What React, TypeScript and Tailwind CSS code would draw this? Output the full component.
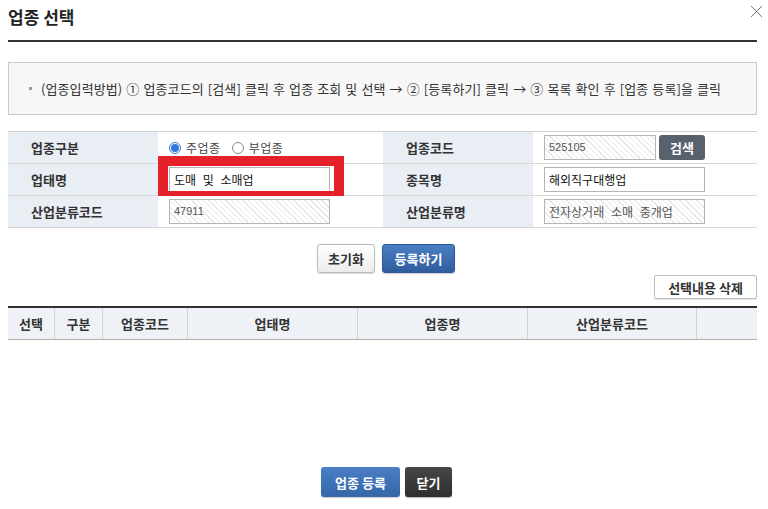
import React from "react";

const hatch =
  "bg-[repeating-linear-gradient(45deg,#ffffff_0px,#ffffff_3px,#e6e6e6_3px,#e6e6e6_4px)]";

function Radio({ checked, label }: { checked?: boolean; label: string }) {
  return (
    <label className="flex items-center gap-[5px] mr-[11px]">
      <span
        className={
          "w-[12px] h-[12px] rounded-full border flex items-center justify-center " +
          (checked ? "border-[#3b73c9] bg-white" : "border-[#8a8a8a] bg-white")
        }
      >
        {checked && <span className="w-[8px] h-[8px] rounded-full bg-[#2f7ad8]" />}
      </span>
      <span className="text-[12px] text-[#444] tracking-[0.5px]">{label}</span>
    </label>
  );
}

function Label({ children }: { children: React.ReactNode }) {
  return (
    <div className="bg-[#e9edf4] pl-[23px] flex items-center text-[13px] font-bold text-[#333] border-b border-[#d6d6d6]">
      {children}
    </div>
  );
}

function Cell({ children }: { children?: React.ReactNode }) {
  return (
    <div className="relative pl-[11px] flex items-center border-b border-[#d6d6d6] bg-white">
      {children}
    </div>
  );
}

function Field({
  value,
  readOnly,
  w = "w-[161px]",
  mono,
}: {
  value: string;
  readOnly?: boolean;
  w?: string;
  mono?: boolean;
}) {
  return (
    <div
      className={
        w +
        " h-[25px] border border-[#b5b5b5] flex items-center px-[4px] [word-spacing:4px] " +
        (readOnly ? hatch + " text-[#555]" : "bg-white text-[#111]") +
        (mono ? " text-[11px] font-['Liberation_Sans',sans-serif]" : " text-[12px]")
      }
    >
      {value}
    </div>
  );
}

export default function App() {
  const cols = [
    { name: "선택", w: "w-[47px]" },
    { name: "구분", w: "w-[48px]" },
    { name: "업종코드", w: "w-[85px]" },
    { name: "업태명", w: "w-[170px]" },
    { name: "업종명", w: "w-[170px]" },
    { name: "산업분류코드", w: "w-[169px]" },
    { name: "", w: "flex-1" },
  ];

  return (
    <div className="w-[768px] h-[509px] bg-white font-['Noto_Sans_CJK_KR','Liberation_Sans',sans-serif] text-[#333] leading-none">
      {/* header */}
      <div className="flex justify-between items-start pl-2 pr-[5px] h-[40px]">
        <h1 className="mt-[8px] text-[17px] font-bold text-[#222]">업종 선택</h1>
        <svg width="13" height="13" viewBox="0 0 13 13" className="mt-[5px]">
          <path d="M1 1 L12 12 M12 1 L1 12" stroke="#777" strokeWidth="1" />
        </svg>
      </div>

      <div className="px-2 w-[765px]">
        <div className="h-[2px] bg-[#333]" />

        {/* guide */}
        <div className="mt-[20px] h-[53px] border border-[#c9c9c9] bg-[#f7f7f7] flex items-center pl-[20px] text-[13px] tracking-[0.1px] [word-spacing:1px] text-[#333]">
          <span className="w-[3px] h-[3px] bg-[#999] mr-[9px]" />
          (업종입력방법) ① 업종코드의 [검색] 클릭 후 업종 조회 및 선택 → ② [등록하기] 클릭 → ③ 목록 확인 후 [업종 등록]을 클릭
        </div>

        {/* form */}
        <div className="mt-[16px] border-t border-[#cfcfcf] grid grid-cols-[150px_225px_150px_224px] auto-rows-[32px]">
          <Label>업종구분</Label>
          <Cell>
            <Radio checked label="주업종" />
            <Radio label="부업종" />
          </Cell>
          <Label>업종코드</Label>
          <Cell>
            <Field value="525105" readOnly w="w-[112px]" mono />
            <button className="ml-[3px] w-[46px] h-[25px] rounded-[3px] bg-[#59616c] text-white text-[13px] font-bold">
              검색
            </button>
          </Cell>

          <Label>업태명</Label>
          <Cell>
            <Field value="도매 및 소매업" />
            <div className="absolute left-0 top-[-8px] w-[186px] h-[45px] border-[10px] border-[#e5212a]" />
          </Cell>
          <Label>종목명</Label>
          <Cell>
            <Field value="해외직구대행업" />
          </Cell>

          <Label>산업분류코드</Label>
          <Cell>
            <Field value="47911" readOnly mono />
          </Cell>
          <Label>산업분류명</Label>
          <Cell>
            <Field value="전자상거래 소매 중개업" readOnly />
          </Cell>
        </div>

        {/* actions */}
        <div className="mt-[16px] flex justify-center gap-[7px] pl-[7px]">
          <button className="w-[58px] h-[29px] rounded-[3px] border border-[#b9b9b9] bg-gradient-to-b from-white to-[#ececec] text-[13px] font-bold text-[#333] shadow-[0_1px_1px_rgba(0,0,0,0.15)]">
            초기화
          </button>
          <button className="w-[73px] h-[29px] rounded-[3px] border border-[#2d5a96] bg-gradient-to-b from-[#4a7ec3] to-[#2f5e9e] text-[13px] font-bold text-white shadow-[0_1px_1px_rgba(0,0,0,0.2)]">
            등록하기
          </button>
        </div>

        <div className="mt-[2px] flex justify-end">
          <button className="w-[103px] h-[24px] rounded-[2px] border border-[#bdbdbd] bg-white text-[13px] font-bold text-[#333] shadow-[0_1px_1px_rgba(0,0,0,0.1)]">
            선택내용 삭제
          </button>
        </div>

        {/* list */}
        <div className="mt-[7px] border-t-2 border-[#333] border-b border-b-[#adadad] bg-[#eef1f6] flex h-[34px]">
          {cols.map((c, i) => (
            <div
              key={i}
              className={
                c.w +
                " flex items-center justify-center text-[13px] font-bold text-[#333] " +
                (i < cols.length - 1 ? "border-r border-[#d2d2d2]" : "")
              }
            >
              {c.name}
            </div>
          ))}
        </div>

        <div className="mt-[127px] flex justify-center gap-[5px] pl-[8px]">
          <button className="w-[79px] h-[30px] rounded-[3px] bg-gradient-to-b from-[#4a7fc6] to-[#3466a8] text-[13px] font-bold text-white shadow-[0_1px_1px_rgba(0,0,0,0.2)]">
            업종 등록
          </button>
          <button className="w-[47px] h-[30px] rounded-[3px] bg-gradient-to-b from-[#474747] to-[#2f2f2f] text-[13px] font-bold text-white shadow-[0_1px_1px_rgba(0,0,0,0.3)]">
            닫기
          </button>
        </div>
      </div>
    </div>
  );
}
